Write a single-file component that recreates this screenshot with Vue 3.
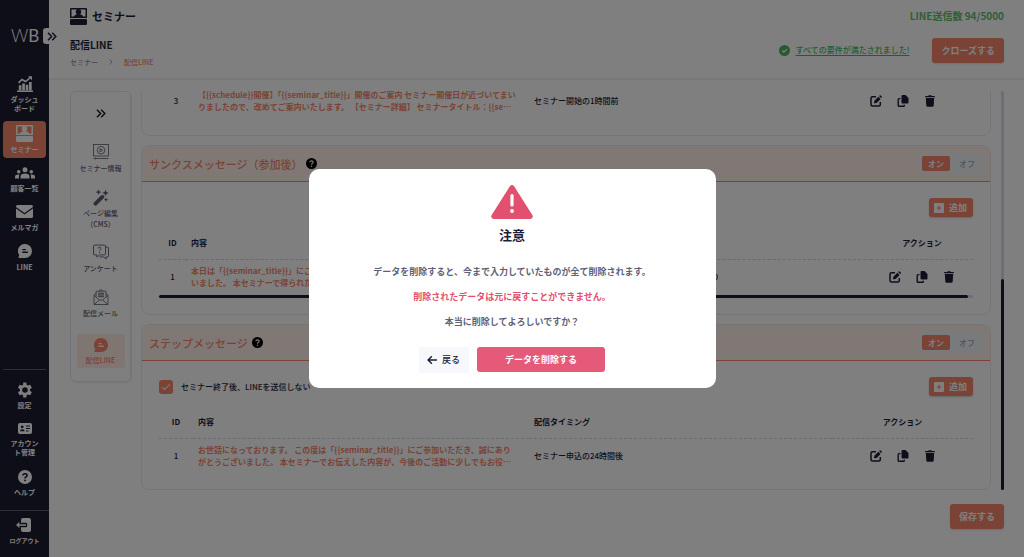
<script setup>
import { ref } from 'vue'

const topNav = [
  { icon: 'chart', lines: ['ダッシュ', 'ボード'] },
  { icon: 'seminar', lines: ['セミナー'], active: true },
  { icon: 'people', lines: ['顧客一覧'] },
  { icon: 'mail', lines: ['メルマガ'] },
  { icon: 'chat', lines: ['LINE'] },
]
const bottomNav = [
  { icon: 'gear', lines: ['設定'] },
  { icon: 'idcard', lines: ['アカウン', 'ト管理'] },
  { icon: 'help', lines: ['ヘルプ'] },
]
const subNav = [
  { icon: 'video', lines: ['セミナー情報'] },
  { icon: 'wand', lines: ['ページ編集', '（CMS）'] },
  { icon: 'survey', lines: ['アンケート'] },
  { icon: 'letter', lines: ['配信メール'] },
  { icon: 'chat', lines: ['配信LINE'], active: true },
]
const reminder = {
  id: 3,
  text: ['【{{schedule}}開催】「{{seminar_title}}」開催のご案内 セミナー開催日が近づいてまい', 'りましたので、改めてご案内いたします。 【セミナー詳細】 セミナータイトル：{{se…'],
  timing: 'セミナー開始の1時間前',
}
const sections = [
  {
    title: 'サンクスメッセージ（参加後）',
    wide: true,
    row: { id: 1, text: ['本日は「{{seminar_title}}」にご', 'いました。 本セミナーで得られた'], timing: '0' },
  },
  {
    title: 'ステップメッセージ',
    check: 'セミナー終了後、LINEを送信しない',
    row: {
      id: 1,
      text: ['お世話になっております。 この度は「{{seminar_title}}」にご参加いただき、誠にあり', 'がとうございました。 本セミナーでお伝えした内容が、今後のご活動に少しでもお役…'],
      timing: 'セミナー申込の24時間後',
    },
  },
]
const skipLine = ref(true)
const actions = [
  { icon: 'edit', label: '編集' },
  { icon: 'copy', label: '複製' },
  { icon: 'trash', label: '削除' },
]
</script>

<template>
  <svg class="defs" aria-hidden="true">
    <symbol id="i-chart" viewBox="0 0 16 16"><path d="M0 15.200h16M1.500 6.800 5 3.500l3.500 2L13.500 1.500" fill="none" stroke="currentColor" stroke-width="1.600"/><path d="M11 .2h4V4.200zM1.800 9.200h2.600V14.500H1.800zM5.200 7.500h2.700v7H5.200zM8.700 8.700h2.600v5.800H8.700zM12 6h2.700v8.500H12z"/></symbol>
    <symbol id="i-seminar" viewBox="0 0 17 17"><path fill-rule="evenodd" d="M1 0h15q1 0 1 1v9H0V1q0-1 1-1zm.5 1.400v7.200h2.300Q4.600 6.600 7 6.200Q5.700 5.300 5.700 4a2.800 2.800 0 0 1 5.600 0Q11.300 5.300 10 6.200Q12.400 6.600 13.200 8.600h2.300V1.400z"/><rect y="11" width="17" height="6" rx="1.200"/></symbol>
    <symbol id="i-people" viewBox="0 0 20 12"><circle cx="10" cy="2.700" r="2.500"/><circle cx="3.700" cy="4.800" r="1.800"/><circle cx="16.300" cy="4.800" r="1.800"/><path d="M5.500 11.500V9.400q0-3 4.500-3t4.500 3v2.100zM0 11.500V9.800q0-2.300 3.500-2.300l1 .1Q4 8.400 4 9.500v2zM20 11.500V9.800q0-2.300-3.500-2.300l-1 .1Q16 8.400 16 9.500v2z"/></symbol>
    <symbol id="i-mail" viewBox="0 0 17 13"><path d="M1.500 0h14Q17 0 17 1.500v.6L8.500 8 0 2.100v-.6Q0 0 1.500 0zM0 3.600l8.500 5.800L17 3.600v7.900q0 1.500-1.500 1.500h-14Q0 13 0 11.500z"/></symbol>
    <symbol id="i-chat" viewBox="0 0 14 14"><path fill-rule="evenodd" d="M7 0a7 7 0 1 1 0 14H1.200Q.2 14 .6 13l.7-1.800A7 7 0 0 1 7 0zM4.800 4.900a.6.6 0 0 0 0 1.300h2.600a.6.6 0 0 0 0-1.300zm0 2.700a.6.6 0 0 0 0 1.300h4.600a.6.6 0 0 0 0-1.300z"/></symbol>
    <symbol id="i-gear" viewBox="0 0 24 24"><path d="M19.430 12.980c.04-.32.07-.64.07-.98s-.03-.66-.07-.98l2.900-2.270-2.700-4.700-3.400 1.350c-.52-.4-1.080-.73-1.690-.98L14 .8h-4.500l-.6 3.620c-.61.25-1.170.59-1.690.98L3.800 4.050l-2.300 4.400 3.070 2.570c-.04.32-.07.65-.07.98s.03.66.07.98L1.500 15.550l2.300 4.400 3.410-1.350c.52.4 1.080.73 1.690.98l.6 3.620H14l.54-3.620c.61-.25 1.170-.59 1.690-.98l3.400 1.350 2.700-4.700zM12 16.200a4.200 4.200 0 1 1 0-8.400 4.200 4.200 0 0 1 0 8.400z"/></symbol>
    <symbol id="i-idcard" viewBox="0 0 14 11"><path fill-rule="evenodd" d="M1.800 0h10.400Q14 0 14 1.800v7.400q0 1.800-1.800 1.800H1.800Q0 11 0 9.200V1.800Q0 0 1.800 0zM4.200 2.500a1.400 1.400 0 1 0 .01 0zM2 8.200h4.600Q6.600 6.200 4.300 6.200T2 8.200zM8 2.600v1h4v-1zM8 5v1h4V5zm0 2.400v1h2.500v-1z"/></symbol>
    <symbol id="i-help" viewBox="0 0 14 14"><circle cx="7" cy="7" r="7"/><path class="knock" d="M4.900 5.500Q5 3.700 7 3.700t2.100 1.700Q9.100 6.500 7.900 7 7 7.400 7 8.500" fill="none" stroke-width="1.500"/><circle class="knock-dot" cx="7" cy="10.400" r=".9"/></symbol>
    <symbol id="i-logout" viewBox="0 0 15 14"><path fill-rule="evenodd" d="M7 0h6q2 0 2 2v10q0 2-2 2H7q-2 0-2-2V9.300h5q1.200 0 1.200-1.200V5.900Q11.200 4.700 10 4.700H5V2q0-2 2-2z"/><path d="M10 7H1.200M3.500 4.600 1 7l2.500 2.400" fill="none" stroke="currentColor" stroke-width="1.300"/></symbol>
    <symbol id="i-video" viewBox="0 0 16 16"><g fill="none" stroke="currentColor" stroke-width=".8"><rect x=".5" y=".5" width="15" height="11.500"/><circle cx="8" cy="6.200" r="3.800"/><path d="M7 4.500v3.400l2.700-1.700zM.5 14.500h15M2.500 13.600v1.800"/></g></symbol>
    <symbol id="i-wand" viewBox="0 0 16 17"><path d="M2.500 14.700 9.300 7.900" fill="none" stroke="currentColor" stroke-width="3.800" stroke-linecap="round"/><path d="m5.500.3.800 2 2 .8-2 .8-.8 2-.8-2-2-.8 2-.8zM12.500.8l.9 2.300 2.300.9-2.300.9-.9 2.300-.9-2.300-2.300-.9 2.300-.9zM13 8.500l.6 1.600 1.600.6-1.600.6-.6 1.600-.6-1.600-1.600-.6 1.600-.6z"/></symbol>
    <symbol id="i-survey" viewBox="0 0 16 15"><g fill="none" stroke="currentColor" stroke-width=".9"><path d="M1.500.6h10q1 0 1 1v7.800q0 1-1 1H6.500l-2.600 2.200v-2.200H1.500q-1 0-1-1V1.600q0-1 1-1zM12.600 2.600h1.900q1 0 1 1v7.800q0 1-1 1h-1.400v2.100l-2.500-2.100H6.500"/><path d="M5 4Q5 2.800 6.500 2.800T8 4.200Q8 5 7.200 5.400t-.7 1.300M6.500 7.600v1"/></g></symbol>
    <symbol id="i-letter" viewBox="0 0 15 16"><g fill="none" stroke="currentColor" stroke-width=".8"><path d="M2.500 4.500 .5 6v9.500h14V6l-2-1.500M.5 6.500l5.500 4.500h3l5.500-4.500M.5 15.500 6 11M14.500 15.500 9 11M2.600 8V2.200h9.800V8M5.500 2l2-1.500L9.500 2"/><path d="M4.500 4.300h6M4.500 6h6M4.500 7.700h6" stroke-width="1.100"/></g></symbol>
    <symbol id="i-edit" viewBox="0 0 12 12"><path d="M6 1.700H2.500Q1 1.700 1 3.200v6.300Q1 11 2.500 11h6.300q1.500 0 1.500-1.500V7" fill="none" stroke="currentColor" stroke-width="1.500"/><path d="M3.900 8.300 4.400 5.700l4-4 2.200 2.200-4 4zM9.100 1.100l.6-.6q.6-.5 1.100 0l.9.900q.5.500 0 1.100l-.6.600z"/></symbol>
    <symbol id="i-copy" viewBox="0 0 12 12"><path d="M5.500 0h3L11.500 3v4.500q0 1-1 1h-5q-1 0-1-1V1q0-1 1-1z"/><path d="M3.500 3.600H2q-.8 0-.8.800v6q0 .8.800.8h4.500q.8 0 .8-.8V9.700" fill="none" stroke="currentColor" stroke-width="1.400"/></symbol>
    <symbol id="i-trash" viewBox="0 0 12 12"><path d="M1.200 1h3L4.700.3h2.600l.5.700h3v1.300H1.200zM1.800 3.100h8.400l-.5 7.500q-.1 1.200-1.300 1.200H3.600q-1.200 0-1.300-1.200z"/></symbol>
    <symbol id="i-chevrons" viewBox="0 0 10 9"><path d="m1 .8 3.600 3.700L1 8.200M5.200.8l3.600 3.700-3.600 3.700" fill="none" stroke="currentColor" stroke-width="1.500"/></symbol>
    <symbol id="i-plus" viewBox="0 0 10 10"><path fill-rule="evenodd" d="M1 0h8q1 0 1 1v8q0 1-1 1H1Q0 10 0 9V1Q0 0 1 0zm3.500 2.800v1.700H2.800v1h1.700v1.700h1V5.500h1.700v-1H5.500V2.800z"/></symbol>
    <symbol id="i-check" viewBox="0 0 11 11"><circle cx="5.500" cy="5.500" r="5.500"/><path d="m3.200 5.500 1.700 1.600 3-3" fill="none" stroke="#fff" stroke-width="1.200"/></symbol>
  </svg>

  <div class="app" lang="ja">
    <aside class="sidebar">
      <div class="logo"><span class="logo-w">W</span><span class="logo-b">B</span></div>
      <button class="expand" type="button" aria-label="メニューを開く"><svg><use href="#i-chevrons" /></svg></button>
      <nav class="nav">
        <a v-for="n in topNav" :key="n.icon" href="#" class="nav-item" :class="{ active: n.active }">
          <svg class="ico" :class="n.icon"><use :href="'#i-' + n.icon" /></svg>
          <span v-for="l in n.lines" :key="l">{{ l }}</span>
        </a>
      </nav>
      <nav class="nav nav-bottom">
        <a v-for="n in bottomNav" :key="n.icon" href="#" class="nav-item">
          <svg class="ico" :class="n.icon"><use :href="'#i-' + n.icon" /></svg>
          <span v-for="l in n.lines" :key="l">{{ l }}</span>
        </a>
      </nav>
      <a href="#" class="nav-item logout">
        <svg class="ico exit"><use href="#i-logout" /></svg>
        <span>ログアウト</span>
      </a>
    </aside>

    <div class="page">
      <header class="header">
        <div class="bar">
          <div class="brand"><svg><use href="#i-seminar" /></svg><span>セミナー</span></div>
          <div class="quota">LINE送信数 94/5000</div>
        </div>
        <div class="bar">
          <div class="heading">
            <h1>配信LINE</h1>
            <div class="crumbs">
              <a href="#">セミナー</a>
              <svg viewBox="0 0 4 6"><path d="m.7.500 2.400 2.500L.7 5.500" fill="none" stroke="currentColor" stroke-width=".8"/></svg>
              <span>配信LINE</span>
            </div>
          </div>
          <div class="status">
            <svg><use href="#i-check" /></svg>
            <a href="#">すべての要件が満たされました!</a>
            <button type="button" class="btn">クローズする</button>
          </div>
        </div>
      </header>

      <div class="body">
        <nav class="subnav">
          <button type="button" class="sub-expand" aria-label="サブメニュー"><svg><use href="#i-chevrons" /></svg></button>
          <a v-for="n in subNav" :key="n.icon" href="#" class="sub-item" :class="[{ active: n.active }, 's-' + n.icon]">
            <svg><use :href="'#i-' + n.icon" /></svg>
            <span v-for="l in n.lines" :key="l">{{ l }}</span>
          </a>
        </nav>

        <div class="content">
          <div class="scroller">
            <div class="list">
              <section class="card first">
                <table class="table">
                  <tbody>
                    <tr>
                      <td class="c-id">{{ reminder.id }}</td>
                      <td class="c-text"><a href="#"><span v-for="l in reminder.text" :key="l">{{ l }}</span></a></td>
                      <td class="c-time">{{ reminder.timing }}</td>
                      <td class="c-act"><div><button v-for="a in actions" :key="a.icon" type="button" :aria-label="a.label"><svg><use :href="'#i-' + a.icon" /></svg></button></div></td>
                    </tr>
                  </tbody>
                </table>
              </section>

              <section v-for="s in sections" :key="s.title" class="card">
                <div class="card-head">
                  <h2>{{ s.title }}</h2>
                  <svg class="hint"><use href="#i-help" /></svg>
                  <div class="toggle"><button type="button" class="on">オン</button><button type="button">オフ</button></div>
                </div>
                <div class="card-body">
                  <div class="tools">
                    <label v-if="s.check"><input v-model="skipLine" type="checkbox" /><span>{{ s.check }}</span></label>
                    <button type="button" class="add"><svg><use href="#i-plus" /></svg>追加</button>
                  </div>
                  <table class="table" :class="{ wide: s.wide }">
                    <thead>
                      <tr><th class="c-id">ID</th><th class="c-text">内容</th><th class="c-time">配信タイミング</th><th class="c-act">アクション</th></tr>
                    </thead>
                    <tbody>
                      <tr>
                        <td class="c-id">{{ s.row.id }}</td>
                        <td class="c-text"><a href="#"><span v-for="l in s.row.text" :key="l">{{ l }}</span></a></td>
                        <td class="c-time">{{ s.row.timing }}</td>
                        <td class="c-act"><div><button v-for="a in actions" :key="a.icon" type="button" :aria-label="a.label"><svg><use :href="'#i-' + a.icon" /></svg></button></div></td>
                      </tr>
                    </tbody>
                  </table>
                  <div v-if="s.wide" class="hbar"><div></div></div>
                </div>
              </section>
            </div>
            <div class="vbar"><div></div></div>
          </div>
          <footer class="foot"><button type="button" class="btn">保存する</button></footer>
        </div>
      </div>
    </div>

    <div class="overlay">
      <div class="modal" role="dialog" aria-modal="true" aria-labelledby="dlg-title">
        <svg class="warn" viewBox="0 0 42 34"><path d="M18.700 1.400q2.300-2.600 4.600 0l18 28.600q1.500 3.500-2 4H2.700q-3.500-.5-2-4z"/><path d="M21 10.500v9.500" fill="none" stroke="#fff" stroke-width="3.200" stroke-linecap="round"/><circle cx="21" cy="26" r="1.900" fill="#fff"/></svg>
        <h2 id="dlg-title">注意</h2>
        <p>データを削除すると、今まで入力していたものが全て削除されます。</p>
        <p class="danger">削除されたデータは元に戻すことができません。</p>
        <p>本当に削除してよろしいですか？</p>
        <div class="modal-actions">
          <button type="button" class="back"><svg viewBox="0 0 10 8"><path d="M9.500 4H1.200M4.400.7 1 4l3.400 3.300" fill="none" stroke="currentColor" stroke-width="1.500" stroke-linecap="round"/></svg>戻る</button>
          <button type="button" class="delete">データを削除する</button>
        </div>
      </div>
    </div>
  </div>
</template>

<style>
body { margin: 0; }
#app { height: 100vh; }
</style>

<style scoped>
* { box-sizing: border-box; }
.defs { position: absolute; width: 0; height: 0; }
.app {
  display: flex; height: 100vh; overflow: hidden; background: #fff; color: #1e1e38;
  font-family: "Noto Sans CJK JP", "Noto Sans", sans-serif; font-size: 8px; line-height: 12px; font-weight: 500;
}
svg { fill: currentColor; display: block; flex: none; }
a { color: inherit; text-decoration: none; }
button { font: inherit; color: inherit; border: 0; padding: 0; background: none; white-space: nowrap; }
h1, h2, p { margin: 0; }
h1, h2 { font-weight: 700; }

.sidebar { position: relative; width: 49px; flex: none; background: #1c1c30; color: #fff; display: flex; flex-direction: column; }
.logo { height: 76px; padding: 26px 0 0 11px; font: 400 17px/20px Lato, sans-serif; }
.logo-w { font-weight: 300; }
.expand { position: absolute; left: 43px; top: 28px; width: 17px; height: 16px; background: #fff; color: #1e1e38; border-radius: 3px; display: grid; place-items: center; }
.expand svg, .sub-expand svg { width: 10px; height: 9px; }
.nav { display: flex; flex-direction: column; gap: 3px; padding: 0 3px; }
.nav-item { display: flex; flex-direction: column; align-items: center; font-size: 7px; line-height: 9px; font-weight: 700; padding-bottom: 5px; border-radius: 4px; }
.nav-item .ico { width: 16px; height: 16px; margin-bottom: 3px; }
.nav .active { background: #f4866b; padding: 4px 0; margin: 0 0 6px; }
.nav .active .ico { width: 17px; height: 17px; }
.nav-item .people { width: 20px; height: 12px; margin-bottom: 5px; }
.nav-item .mail { width: 17px; height: 13px; margin: 4px 0 5px; }
.nav-item .chat { width: 14px; height: 14px; margin: 4px 0 5px; }
.nav-bottom { margin: auto 3px 0; border-top: 1px solid #5c5c6e; padding: 12px 0 11px; gap: 11px; }
.nav-item .idcard { width: 14px; height: 11px; margin-bottom: 5px; }
.nav-bottom .nav-item { padding-bottom: 2px; }
.nav-bottom .nav-item:last-child { padding-bottom: 2px; }
.nav-item .help { width: 14px; height: 14px; margin-bottom: 4px; --k: #1c1c30; }
.knock { stroke: var(--k, #fff); }
.knock-dot { fill: var(--k, #fff); }
.logout { border-top: 1px solid #5c5c6e; border-radius: 0; padding: 7px 0 12px; font-size: 6px; }
.nav-item .exit { width: 15px; height: 14px; margin: 0 3px 4px 0; }

.page { flex: 1; min-width: 0; display: flex; flex-direction: column; }
.header { height: 80px; flex: none; padding: 6px 20px 0 21px; border-bottom: 2px solid #f0f1f5; display: flex; flex-direction: column; gap: 12px; }
.bar { display: flex; justify-content: space-between; }
.brand { display: flex; align-items: center; gap: 5px; font-size: 11px; line-height: 20px; font-weight: 700; }
.brand svg { width: 17px; height: 17px; }
.quota { font-size: 10px; line-height: 20px; color: #58bf70; font-weight: 700; }
h1 { font-size: 10px; line-height: 14px; }
.crumbs { display: flex; align-items: center; font-size: 7px; line-height: 10px; margin-top: 5px; color: #8b8fa3; font-weight: 500; }
.crumbs svg { width: 4px; height: 6px; margin: 0 11px; }
.crumbs span { color: #f4866b; }
.status { display: flex; align-items: center; color: #48b860; height: 24px; }
.status > svg { width: 11px; height: 11px; margin-right: 6px; }
.status a { text-decoration: underline; text-underline-offset: 2px; margin-right: 23px; }
.btn { background: #f4866b; color: #fff; font-size: 9px; line-height: 25px; padding: 0 9px; border-radius: 3px; font-weight: 700; box-shadow: 0 1px 2px #0002; }

.body { flex: 1; min-height: 0; display: flex; align-items: flex-start; padding: 11px 20px 0 21px; gap: 10px; }
.subnav { width: 61px; flex: none; height: 291px; border: 1px solid #e4e6ef; border-radius: 5px; box-shadow: 1px 1px 2px #0001; display: flex; flex-direction: column; align-items: center; color: #5c5c72; padding-bottom: 13px; }
.sub-expand { color: #1e1e38; padding: 17px 0 26px; }
.sub-item { display: flex; flex-direction: column; align-items: center; font-size: 7px; line-height: 11px; font-weight: 500; width: 48px; white-space: nowrap; height: 46px; }
.sub-item svg { width: 16px; height: 16px; margin-bottom: 3px; }
.s-wand { height: 56px; }
.s-wand svg { margin-bottom: 2px; height: 17px; }
.sub-item.active { background: #ffebe3; color: #f4866b; height: 35px; border-radius: 3px; padding-top: 4px; margin-top: auto; }
.sub-item.active svg { width: 14px; height: 14px; margin-bottom: 3px; }

.content { flex: 1; min-width: 0; display: flex; flex-direction: column; }
.scroller { display: flex; gap: 10px; height: 399px; overflow: hidden; }
.list { flex: 1; min-width: 0; }
.card { border: 1px solid #e9ebf2; border-radius: 8px; margin-bottom: 9px; overflow: hidden; }
.card.first { margin-top: -15px; padding: 6px 17px 17px; }
.card-head { display: flex; align-items: center; height: 36px; padding: 0 6px 0 7px; background: #fff0ea; border-bottom: 1px solid #f4866b; }
.card-head h2 { color: #f4866b; font-size: 11px; line-height: 16px; font-weight: 500; }
.hint { width: 11px; height: 11px; margin-left: 4px; color: #000; }
.toggle { margin-left: auto; display: flex; background: #f3f5f9; border-radius: 3px; padding: 3px; }
.toggle button { width: 28px; line-height: 15px; border-radius: 2px; color: #a1a5b7; margin-right: 3px; }
.toggle button:last-child { margin-right: 0; }
.toggle .on { background: #f4866b; color: #fff; font-weight: 700; }
.card-body { padding: 16px 17px; }
.tools { display: flex; align-items: center; height: 19px; }
.tools label { display: flex; align-items: center; gap: 8px; }
.tools input { appearance: none; width: 14px; height: 14px; margin: 0; border-radius: 3px; background: #f4866b; display: grid; place-items: center; }
.tools input:checked::after { content: ""; width: 7px; height: 3px; border: solid #fff; border-width: 0 0 1px 1px; transform: translateY(-1px) rotate(-45deg); }
.add { margin-left: auto; display: flex; align-items: center; gap: 5px; background: #f4866b; color: #fff; font-size: 9px; line-height: 19px; font-weight: 700; padding: 0 6px 0 5px; border-radius: 3px; box-shadow: 0 1px 2px #0003; }
.add svg { width: 10px; height: 10px; }

.table { width: 100%; border-collapse: collapse; table-layout: fixed; }
th { height: 31px; padding: 0; text-align: left; font-weight: 700; border-bottom: 1px dashed #d8dae6; }
.tools + .table { margin-top: 11px; }
td { height: 35px; padding: 0; }
.c-id { width: 34px; text-align: center; }
.c-text { width: 336px; padding-left: 5px; }
.c-text a { color: #f4866b; font-weight: 700; }
.c-text span { display: block; white-space: nowrap; }
.c-time { padding-left: 5px; }
.c-act { width: 141px; text-align: center; }
.c-act div { display: flex; justify-content: center; gap: 15px; }
.c-act button svg { width: 12px; height: 12px; }
.wide .c-id { width: 27px; }
.wide .c-act { width: 102px; }
.wide td.c-time { text-align: right; padding-right: 153px; }
.hbar { height: 3px; margin-top: 1px; border-radius: 2px; background: #dcdfea; }
.hbar div { width: calc(100% - 5px); height: 3px; border-radius: 2px; background: #1c1c30; }
.vbar { width: 3px; flex: none; background: #dcdfea; border-radius: 2px; display: flex; align-items: flex-end; }
.vbar div { width: 3px; height: 53%; border-radius: 2px; background: #1c1c30; }
.foot { display: flex; justify-content: flex-end; padding-top: 14px; }

.overlay { position: fixed; inset: 0; background: rgba(0, 0, 0, .5); display: grid; place-items: center; }
.modal { width: 407px; background: #fff; border-radius: 10px; padding: 16px 0 15px; display: flex; flex-direction: column; align-items: center; color: #5e6278; font-size: 9px; font-weight: 700; }
.warn { width: 42px; height: 34px; color: #e2506f; }
.modal h2 { font-size: 13px; line-height: 20px; color: #1e1e38; margin: 6px 0 14px; }
.modal p { line-height: 25px; }
.modal .danger { color: #e2506f; }
.modal-actions { display: flex; align-items: flex-start; gap: 8px; margin-top: 13px; }
.back { display: flex; align-items: center; gap: 5px; background: #f7f8fb; color: #1e1e38; font-weight: 500; line-height: 26px; padding: 0 8px; border-radius: 3px; width: 50px; }
.back svg { width: 10px; height: 8px; }
.delete { background: #e45a78; color: #fff; line-height: 25px; width: 128px; border-radius: 3px; font-weight: 700; }
</style>
